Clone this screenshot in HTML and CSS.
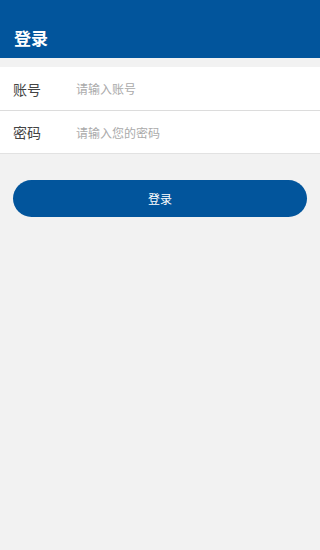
FILE: index.html
```html
<!DOCTYPE html>
<html lang="zh-CN">
<head>
<meta charset="utf-8">
<title>登录</title>
<link rel="stylesheet" href="styles.css">
</head>
<body>
<header class="topbar">
  <h1 class="title">登录</h1>
</header>
<form class="form">
  <div class="fields">
    <label class="row">
      <span class="label">账号</span>
      <input class="input" type="text" placeholder="请输入账号">
    </label>
    <label class="row">
      <span class="label">密码</span>
      <input class="input" type="password" placeholder="请输入您的密码">
    </label>
  </div>
  <div class="actions">
    <button class="btn" type="button">登录</button>
  </div>
</form>
</body>
</html>
```
FILE: styles.css
```css
* { box-sizing: border-box; }
html, body {
  margin: 0;
  padding: 0;
  height: 100%;
}
body {
  background: #f2f2f2;
  font-family: "Noto Sans CJK SC", "Noto Sans", sans-serif;
  color: #444;
  overflow-x: hidden;
}
.topbar {
  height: 58px;
  background: #02559c;
  display: flex;
  align-items: flex-end;
  padding: 0 14px 6px;
}
.title {
  margin: 0;
  font-size: 17px;
  font-weight: 700;
  color: #fff;
  line-height: 28px;
}
.form {
  margin: 0;
  padding-top: 9px;
}
.fields {
  background: #fff;
  border-bottom: 1px solid #e2e2e2;
}
.row {
  display: flex;
  align-items: center;
  height: 43px;
  padding-left: 13px;
}
.row + .row {
  border-top: 1px solid #dcdcdc;
}
.label {
  flex: none;
  width: 63px;
  font-size: 14px;
  color: #444;
}
.input {
  flex: 1;
  min-width: 0;
  width: 0;
  border: 0;
  outline: 0;
  background: transparent;
  font-family: inherit;
  font-size: 12px;
  color: #444;
  padding: 0;
}
.input::placeholder {
  color: #aaaaaa;
}
.actions {
  padding: 26px 13px 0;
}
.btn {
  display: block;
  width: 100%;
  height: 37px;
  border: 0;
  border-radius: 19px;
  background: #02559c;
  color: #fff;
  font-family: inherit;
  font-size: 12px;
  padding: 0;
}
```
